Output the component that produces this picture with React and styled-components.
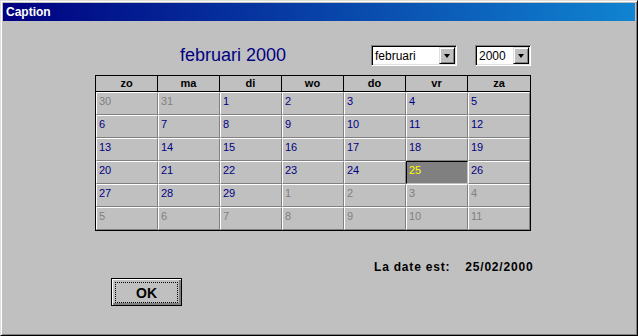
import React from "react";
import styled, { createGlobalStyle } from "styled-components";

const Global = createGlobalStyle`
  body {
    margin: 0;
    background: #c0c0c0;
  }
`;

const headers = ["zo", "ma", "di", "wo", "do", "vr", "za"];

const buildDays = () => {
  const days = [30, 31].map((d) => ({ d, other: true }));
  for (let i = 1; i <= 29; i++) days.push({ d: i, other: false, selected: i === 25 });
  let n = 1;
  while (days.length < 42) days.push({ d: n++, other: true });
  return days;
};

const App = () => {
  const days = buildDays();
  return (
    <>
      <Global />
      <Window>
        <TitleBar>Caption</TitleBar>
        <Body>
          <Toolbar>
            <Heading>februari 2000</Heading>
            <Select w={86}>
              <SelectText>februari</SelectText>
              <DropButton>
                <Arrow />
              </DropButton>
            </Select>
            <Select w={56}>
              <SelectText>2000</SelectText>
              <DropButton>
                <Arrow />
              </DropButton>
            </Select>
          </Toolbar>

          <Grid>
            {headers.map((h) => (
              <HeadCell key={h}>{h}</HeadCell>
            ))}
            {days.map((x, i) => (
              <DayCell key={i} other={x.other} selected={x.selected}>
                {x.d}
              </DayCell>
            ))}
          </Grid>

          <DateLine>
            <span>La date est:</span>
            <span>25/02/2000</span>
          </DateLine>

          <OkButton>
            <FocusRing>OK</FocusRing>
          </OkButton>
        </Body>
      </Window>
    </>
  );
};

export default App;

const Window = styled.div`
  width: 638px;
  height: 336px;
  box-sizing: border-box;
  background: #c0c0c0;
  border-top: 1px solid #dfdfdf;
  border-left: 1px solid #dfdfdf;
  border-right: 1px solid #000;
  border-bottom: 1px solid #000;
  box-shadow: inset 1px 1px #fff, inset -1px -1px #808080;
  padding: 2px;
  display: flex;
  flex-direction: column;
  font-family: "Liberation Sans", Arial, sans-serif;
`;

const TitleBar = styled.div`
  height: 18px;
  line-height: 18px;
  padding-left: 3px;
  color: #fff;
  font-size: 12px;
  font-weight: bold;
  background: linear-gradient(to right, #000080, #1084d0);
`;

const Body = styled.div`
  display: flex;
  flex-direction: column;
  align-items: flex-start;
  padding: 24px 0 0 92px;
`;

const Toolbar = styled.div`
  width: 436px;
  height: 21px;
  display: flex;
  align-items: center;
  gap: 18px;
`;

const Heading = styled.div`
  flex: 1;
  padding-left: 18px;
  text-align: center;
  color: #000080;
  font-size: 18px;
  line-height: 21px;
`;

const Select = styled.div`
  width: ${(p) => p.w}px;
  height: 21px;
  box-sizing: border-box;
  display: flex;
  align-items: center;
  justify-content: space-between;
  background: #fff;
  border-top: 1px solid #808080;
  border-left: 1px solid #808080;
  border-right: 1px solid #fff;
  border-bottom: 1px solid #fff;
  box-shadow: inset 1px 1px #000, inset -1px -1px #dfdfdf;
  padding: 1px 1px 1px 3px;
`;

const SelectText = styled.span`
  font-size: 12px;
  color: #000;
`;

const DropButton = styled.div`
  width: 16px;
  height: 17px;
  box-sizing: border-box;
  display: flex;
  align-items: center;
  justify-content: center;
  background: #c0c0c0;
  border-top: 1px solid #dfdfdf;
  border-left: 1px solid #dfdfdf;
  border-right: 1px solid #000;
  border-bottom: 1px solid #000;
  box-shadow: inset 1px 1px #fff, inset -1px -1px #808080;
`;

const Arrow = styled.span`
  width: 0;
  height: 0;
  border-left: 3.5px solid transparent;
  border-right: 3.5px solid transparent;
  border-top: 4px solid #000;
`;

const Grid = styled.div`
  margin-top: 9px;
  display: grid;
  grid-template-columns: repeat(7, 62px);
  border: 1px solid #000;
  background: #c0c0c0;
`;

const HeadCell = styled.div`
  height: 16px;
  box-sizing: border-box;
  border-right: 1px solid #000;
  border-bottom: 1px solid #000;
  text-align: center;
  font-size: 11px;
  font-weight: bold;
  line-height: 15px;
  color: #000;
  &:nth-child(7) {
    border-right: none;
  }
`;

const DayCell = styled.div`
  height: 23px;
  box-sizing: border-box;
  padding: 2px 0 0 2px;
  font-size: 11px;
  line-height: 13px;
  border-top: 1px solid ${(p) => (p.selected ? "#000" : "#fff")};
  border-left: 1px solid ${(p) => (p.selected ? "#000" : "#fff")};
  border-right: 1px solid ${(p) => (p.selected ? "#c0c0c0" : "#808080")};
  border-bottom: 1px solid ${(p) => (p.selected ? "#c0c0c0" : "#808080")};
  background: ${(p) => (p.selected ? "#808080" : "#c0c0c0")};
  color: ${(p) => (p.selected ? "#ffff00" : p.other ? "#808080" : "#000080")};
`;

const DateLine = styled.div`
  margin: 29px 0 0 279px;
  display: flex;
  gap: 15px;
  font-size: 12px;
  font-weight: bold;
  line-height: 15px;
  letter-spacing: 0.8px;
  color: #000;
`;

const OkButton = styled.div`
  margin: 3px 0 0 16px;
  width: 71px;
  height: 28px;
  box-sizing: border-box;
  display: flex;
  border: 1px solid #000;
  background: #c0c0c0;
  box-shadow: inset 1px 1px #fff, inset -1px -1px #808080, inset -2px -2px #808080;
  padding: 3px 3px 2px 3px;
`;

const FocusRing = styled.div`
  flex: 1;
  display: flex;
  align-items: center;
  justify-content: center;
  border: 1px dotted #000;
  font-size: 14px;
  font-weight: bold;
  color: #000;
`;
